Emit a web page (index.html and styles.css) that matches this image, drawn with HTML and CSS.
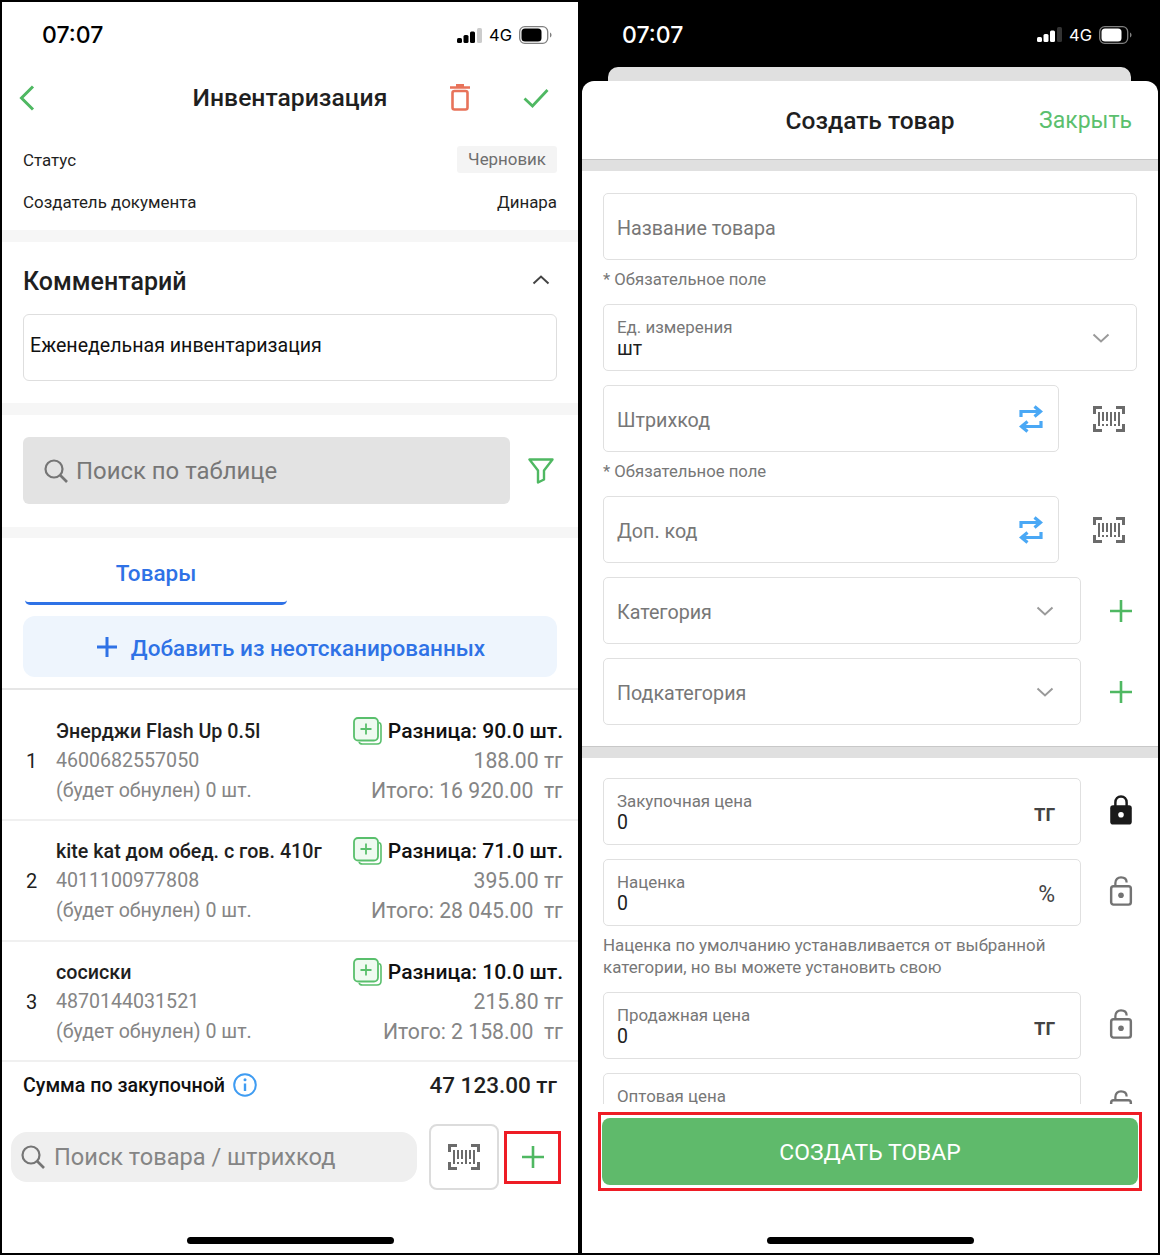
FILE: index.html
```html
<!DOCTYPE html>
<html lang="ru">
<head>
<meta charset="utf-8">
<title>Инвентаризация</title>
<link rel="stylesheet" href="styles.css">
</head>
<body>

<svg class="defs" width="0" height="0">
  <symbol id="barcode" viewBox="0 0 32 26">
    <path d="M1.500 8V1.500H9M23 1.500h7.500V8M1.500 18v6.500H9M23 24.500h7.500V18" fill="none" stroke="currentColor" stroke-width="3"/>
    <path d="M6 6v14M10 6v9M14 6v9M18 6v14M22 6v9M26 6v14M10 18v2M14 18v2M22 18v2" fill="none" stroke="currentColor" stroke-width="2"/>
  </symbol>
  <symbol id="swap" viewBox="0 0 24 28">
    <path d="M2 12V6.500h19M15.500 1.500l6 5-6 5M22 16v5.500H3M8.500 16.500l-6 5 6 5" fill="none" stroke="currentColor" stroke-width="3.200"/>
  </symbol>
  <symbol id="chev" viewBox="0 0 18 10">
    <path d="M1.500 1.500L9 8.500l7.500-7" fill="none" stroke="currentColor" stroke-width="2"/>
  </symbol>
  <symbol id="plus" viewBox="0 0 24 24">
    <path d="M12 1v22M1 12h22" fill="none" stroke="currentColor" stroke-width="2.600"/>
  </symbol>
  <symbol id="lens" viewBox="0 0 24 24">
    <circle cx="10" cy="10" r="8.500" fill="none" stroke="currentColor" stroke-width="2.200"/>
    <path d="M16 16l7 7" fill="none" stroke="currentColor" stroke-width="2.600"/>
  </symbol>
  <symbol id="lock-open" viewBox="0 0 24 32">
    <path d="M6 11V7.500C6 3.500 8.500 1.500 12 1.500s6 2 6 5.500" fill="none" stroke="currentColor" stroke-width="2.400"/>
    <rect x="1.500" y="11" width="21" height="19.500" rx="2.500" fill="none" stroke="currentColor" stroke-width="2.600"/>
    <circle cx="12" cy="20.500" r="3" fill="currentColor"/>
  </symbol>
  <symbol id="lock-closed" viewBox="0 0 24 32">
    <path d="M6 12V8c0-4 2.500-6.500 6-6.500S18 4 18 8v4" fill="none" stroke="currentColor" stroke-width="2.600"/>
    <rect x="0.500" y="11" width="23" height="20.500" rx="3" fill="currentColor"/>
    <circle cx="12" cy="21" r="3" fill="#fff"/>
  </symbol>
  <symbol id="copy-plus" viewBox="0 0 29 28">
    <path d="M26 5.500c1.500.5 2 1.500 2 3V23c0 2.500-1.500 4-4 4H9.500c-2 0-3-.5-3.500-2" fill="none" stroke="currentColor" stroke-width="1.600"/>
    <rect x="1" y="1" width="24" height="22.500" rx="4" fill="#effaf1" stroke="currentColor" stroke-width="1.800"/>
    <path d="M13 6.500v11M7.500 12h11" fill="none" stroke="currentColor" stroke-width="1.800"/>
  </symbol>
  <symbol id="signal" viewBox="0 0 25 15">
    <rect x="0" y="10" width="5" height="5" rx="1.500"/>
    <rect x="6.500" y="7" width="5" height="8" rx="1.500"/>
    <rect x="13" y="3.500" width="5" height="11.500" rx="1.500"/>
    <rect x="20" y="0" width="5" height="15" rx="1.500" opacity="0.2"/>
  </symbol>
  <symbol id="battery" viewBox="0 0 33 18">
    <rect x="0.700" y="0.700" width="28" height="16.600" rx="5" fill="none" stroke="currentColor" stroke-opacity="0.5" stroke-width="1.300"/>
    <rect x="2.500" y="2.500" width="20" height="13" rx="3.500" fill="currentColor"/>
    <path d="M31 6.500c1 .5 1.500 1.500 1.500 2.500s-.5 2-1.500 2.500z" fill="currentColor" fill-opacity="0.5"/>
  </symbol>
</svg>

<div class="phone phone-light">
  <div class="status">
    <span class="time">07:07</span>
    <span class="status-right">
      <svg class="ic-signal"><use href="#signal"/></svg>
      <span class="net">4G</span>
      <svg class="ic-battery"><use href="#battery"/></svg>
    </span>
  </div>

  <div class="nav">
    <svg class="ic-back" viewBox="0 0 16 26"><path d="M14 1.500L2.500 13 14 24.500" fill="none" stroke="currentColor" stroke-width="3"/></svg>
    <h1 class="nav-title">Инвентаризация</h1>
    <svg class="ic-trash" viewBox="0 0 20 27"><path d="M0 3.500h20M6 1.200h8" fill="none" stroke="currentColor" stroke-width="2.400"/><rect x="2.500" y="7" width="15" height="18.500" rx="2" fill="none" stroke="currentColor" stroke-width="2.600"/></svg>
    <svg class="ic-check" viewBox="0 0 26 20"><path d="M1.500 10.500L9.500 18 24.500 2" fill="none" stroke="currentColor" stroke-width="2.800"/></svg>
  </div>

  <div class="info">
    <div class="info-row"><span>Статус</span><span class="badge">Черновик</span></div>
    <div class="info-row info-row-two"><span>Создатель документа</span><span>Динара</span></div>
  </div>
  <div class="band"></div>

  <div class="comment">
    <div class="comment-head">
      <h2 class="comment-title">Комментарий</h2>
      <svg class="ic-up"><use href="#chev"/></svg>
    </div>
    <div class="comment-box">Еженедельная инвентаризация</div>
  </div>
  <div class="band"></div>

  <div class="table-search">
    <div class="table-search-box">
      <svg class="ic-lens"><use href="#lens"/></svg>
      <span>Поиск по таблице</span>
    </div>
    <svg class="ic-filter" viewBox="0 0 26 26"><path d="M1.500 1.500h23l-8.500 11v9l-6 3v-12z" fill="none" stroke="currentColor" stroke-width="2.400" stroke-linejoin="round"/></svg>
  </div>
  <div class="band band-thin"></div>

  <div class="tabs"><span class="tab">Товары</span></div>
  <div class="add-btn">
    <svg class="ic-add" viewBox="0 0 20 20"><path d="M10 0v20M0 10h20" fill="none" stroke="currentColor" stroke-width="3"/></svg>
    <span>Добавить из неотсканированных</span>
  </div>

  <div class="items">
    <div class="item">
      <div class="item-num">1</div>
      <div class="item-main">
        <div class="item-name">Энерджи Flash Up 0.5l</div>
        <div class="item-sub">4600682557050</div>
        <div class="item-sub">(будет обнулен) 0 шт.</div>
      </div>
      <div class="item-side">
        <div class="item-diff"><svg class="ic-copy"><use href="#copy-plus"/></svg>Разница: 90.0 шт.</div>
        <div class="item-sub">188.00 тг</div>
        <div class="item-sub">Итого: 16 920.00 &nbsp;тг</div>
      </div>
    </div>
    <div class="item">
      <div class="item-num">2</div>
      <div class="item-main">
        <div class="item-name">kite kat дом обед. с гов. 410г</div>
        <div class="item-sub">4011100977808</div>
        <div class="item-sub">(будет обнулен) 0 шт.</div>
      </div>
      <div class="item-side">
        <div class="item-diff"><svg class="ic-copy"><use href="#copy-plus"/></svg>Разница: 71.0 шт.</div>
        <div class="item-sub">395.00 тг</div>
        <div class="item-sub">Итого: 28 045.00 &nbsp;тг</div>
      </div>
    </div>
    <div class="item">
      <div class="item-num">3</div>
      <div class="item-main">
        <div class="item-name">сосиски</div>
        <div class="item-sub">4870144031521</div>
        <div class="item-sub">(будет обнулен) 0 шт.</div>
      </div>
      <div class="item-side">
        <div class="item-diff"><svg class="ic-copy"><use href="#copy-plus"/></svg>Разница: 10.0 шт.</div>
        <div class="item-sub">215.80 тг</div>
        <div class="item-sub">Итого: 2 158.00 &nbsp;тг</div>
      </div>
    </div>
  </div>

  <div class="total">
    <span class="total-label">Сумма по закупочной
      <svg class="ic-info" viewBox="0 0 24 24"><circle cx="12" cy="12" r="10.800" fill="none" stroke="currentColor" stroke-width="2"/><path d="M12 10.500v7.500" stroke="currentColor" stroke-width="2.400"/><circle cx="12" cy="6.800" r="1.500" fill="currentColor"/></svg>
    </span>
    <span class="total-sum">47 123.00 тг</span>
  </div>

  <div class="bottom">
    <div class="bottom-search">
      <svg class="ic-lens"><use href="#lens"/></svg>
      <span>Поиск товара / штрихкод</span>
    </div>
    <div class="scan-btn"><svg class="ic-barcode"><use href="#barcode"/></svg></div>
    <div class="plus-mark"><svg class="ic-add-green"><use href="#plus"/></svg></div>
  </div>

  <div class="home"></div>
</div>

<div class="phone phone-dark">
  <div class="status">
    <span class="time">07:07</span>
    <span class="status-right">
      <svg class="ic-signal"><use href="#signal"/></svg>
      <span class="net">4G</span>
      <svg class="ic-battery"><use href="#battery"/></svg>
    </span>
  </div>
  <div class="back-card"></div>

  <div class="sheet">
    <div class="sheet-head">
      <h2 class="sheet-title">Создать товар</h2>
      <span class="sheet-close">Закрыть</span>
    </div>
    <div class="sheet-band"></div>

    <div class="form">
      <div class="form-part">
        <div class="field field-plain">Название товара</div>
        <div class="note">* Обязательное поле</div>

        <div class="field field-label">
          <div class="field-text"><small>Ед. измерения</small><b>шт</b></div>
          <svg class="ic-chev ic-chev-wide"><use href="#chev"/></svg>
        </div>

        <div class="row row-top">
          <div class="field field-plain field-scan">Штрихкод<svg class="ic-swap"><use href="#swap"/></svg></div>
          <div class="side side-scan"><svg class="ic-barcode"><use href="#barcode"/></svg></div>
        </div>
        <div class="note">* Обязательное поле</div>

        <div class="row">
          <div class="field field-plain field-scan">Доп. код<svg class="ic-swap"><use href="#swap"/></svg></div>
          <div class="side side-scan"><svg class="ic-barcode"><use href="#barcode"/></svg></div>
        </div>

        <div class="row row-top">
          <div class="field field-plain field-side">Категория<svg class="ic-chev"><use href="#chev"/></svg></div>
          <div class="side"><svg class="ic-add-green"><use href="#plus"/></svg></div>
        </div>

        <div class="row row-top">
          <div class="field field-plain field-side">Подкатегория<svg class="ic-chev"><use href="#chev"/></svg></div>
          <div class="side"><svg class="ic-add-green"><use href="#plus"/></svg></div>
        </div>
      </div>

      <div class="sheet-band form-band"></div>

      <div class="form-part">
        <div class="row">
          <div class="field field-side field-label">
            <div class="field-text"><small>Закупочная цена</small><b>0</b></div>
            <span class="unit">тг</span>
          </div>
          <div class="side"><svg class="ic-lock ic-lock-dark"><use href="#lock-closed"/></svg></div>
        </div>
        <div class="row row-top">
          <div class="field field-side field-label">
            <div class="field-text"><small>Наценка</small><b>0</b></div>
            <span class="unit unit-pct">%</span>
          </div>
          <div class="side"><svg class="ic-lock"><use href="#lock-open"/></svg></div>
        </div>
        <div class="hint">Наценка по умолчанию устанавливается от выбранной категории, но вы можете установить свою</div>
        <div class="row">
          <div class="field field-side field-label">
            <div class="field-text"><small>Продажная цена</small><b>0</b></div>
            <span class="unit">тг</span>
          </div>
          <div class="side"><svg class="ic-lock"><use href="#lock-open"/></svg></div>
        </div>
        <div class="row row-top">
          <div class="field field-clip">
            <div class="field-text"><small>Оптовая цена</small></div>
          </div>
          <div class="side"><svg class="ic-lock"><use href="#lock-open"/></svg></div>
        </div>
      </div>
    </div>

    <div class="submit-mark"><div class="submit">СОЗДАТЬ ТОВАР</div></div>
    <div class="home"></div>
  </div>
</div>

</body>
</html>
```

FILE: styles.css
```css
html, body { margin: 0; padding: 0; }
body {
  width: 1160px;
  height: 1255px;
  background: #000;
  display: flex;
  gap: 4px;
  padding: 2px;
  box-sizing: border-box;
  overflow: hidden;
  font-family: Roboto, "Liberation Sans", sans-serif;
  color: #1f1f1f;
}
h1, h2 { margin: 0; }
.defs { position: absolute; }

.phone { width: 576px; height: 1251px; overflow: hidden; flex: none; }
.phone-light { background: #fff; }
.phone-dark { background: #000; }

/* status bar */
.status {
  height: 66px;
  display: flex;
  justify-content: space-between;
  align-items: center;
  padding: 0 26px 0 40px;
  box-sizing: border-box;
  color: #000;
}
.phone-dark .status { color: #fff; height: 65px; }
.time { font: 500 23px Inter, sans-serif; }
.status-right { display: flex; align-items: center; }
.ic-signal { width: 25px; height: 15px; fill: currentColor; }
.net { font: 400 16.500px Inter, sans-serif; margin: 0 7px; }
.ic-battery { width: 33px; height: 18px; }

/* left: nav */
.nav { height: 60px; position: relative; text-align: center; }
.nav-title { font-size: 24.700px; font-weight: 500; line-height: 60px; }
.ic-back { position: absolute; left: 17px; top: 17px; width: 16px; height: 26px; color: #4fb862; }
.ic-trash { position: absolute; left: 448px; top: 16px; width: 20px; height: 27px; color: #e8735a; }
.ic-check { position: absolute; left: 521px; top: 20px; width: 26px; height: 20px; color: #4fb862; }

.info { height: 102px; padding: 18px 21px 0; box-sizing: border-box; font-size: 16.900px; }
.info-row { display: flex; justify-content: space-between; align-items: center; height: 27px; }
.info-row-two { margin-top: 15px; }
.badge { background: #f4f4f4; color: #6e6e6e; padding: 0 11px; line-height: 27px; border-radius: 3px; }

.band { height: 12px; background: #f6f6f6; }
.band-thin { height: 11px; }

.comment { height: 161px; padding: 22px 21px 0; box-sizing: border-box; }
.comment-head { height: 34px; display: flex; justify-content: space-between; align-items: center; margin-bottom: 16px; }
.comment-title { font-size: 25px; font-weight: 500; }
.ic-up { width: 18px; height: 10px; margin: 0 7px 2px 0; transform: rotate(180deg); color: #444; }
.comment-box {
  height: 67px;
  border: 1.500px solid #dedede;
  border-radius: 6px;
  box-sizing: border-box;
  padding-left: 6px;
  line-height: 62px;
  font-size: 19.600px;
  color: #111;
}

.table-search { height: 112px; display: flex; padding: 22px 21px 0; box-sizing: border-box; align-items: flex-start; }
.table-search-box {
  width: 487px;
  height: 67px;
  background: #e3e3e3;
  border-radius: 6px;
  display: flex;
  align-items: center;
  padding-left: 21px;
  box-sizing: border-box;
  color: #777;
  font-size: 23.900px;
}
.ic-lens { width: 24px; height: 24px; margin-right: 8px; flex: none; color: #757575; }
.ic-filter { width: 26px; height: 26px; margin: 21px 0 0 18px; color: #4fb862; }

.tabs { height: 67px; padding-left: 23px; }
.tab {
  display: block;
  width: 262px;
  height: 67px;
  box-sizing: border-box;
  text-align: center;
  line-height: 71px;
  font-size: 22.500px;
  font-weight: 500;
  color: #2f72e6;
  border-bottom: 3px solid #2f72e6;
  border-radius: 0 0 5px 5px;
}
.add-btn {
  margin: 11px 21px;
  height: 61px;
  padding-left: 2px;
  background: #eef5fd;
  border-radius: 12px;
  display: flex;
  align-items: center;
  justify-content: center;
  color: #2f72e6;
  font-size: 22.500px;
  font-weight: 500;
}
.add-btn span { padding-top: 2px; }
.ic-add { width: 20px; height: 20px; margin-right: 14px; }

/* left: goods */
.items { border-top: 2px solid #e6e6e6; padding-top: 11px; }
.item {
  height: 120.500px;
  border-bottom: 2px solid #f0f0f0;
  box-sizing: border-box;
  display: flex;
  padding: 15px 15px 0 24px;
}
.item:first-child { height: 120px; }
.item-num { width: 30px; font-size: 20px; line-height: 30px; padding-top: 30px; flex: none; }
.item-main { flex: 1; padding-top: 1px; }
.item-name { font-size: 19.700px; font-weight: 500; line-height: 29px; white-space: nowrap; }
.item-sub { font-size: 19.600px; line-height: 30px; color: #858585; white-space: nowrap; }
.item-side { text-align: right; }
.item-side .item-sub { font-size: 21.200px; }
.item-diff { font-size: 21.100px; font-weight: 500; line-height: 30px; color: #111; white-space: nowrap; display: flex; align-items: center; justify-content: flex-end; }
.ic-copy { width: 29px; height: 28px; margin-right: 6px; color: #59bf6c; }

.total { height: 44px; display: flex; justify-content: space-between; align-items: center; padding: 2px 21px 0; box-sizing: border-box; font-weight: 500; }
.total-label { font-size: 19.600px; display: flex; align-items: center; color: #111; }
.ic-info { width: 24px; height: 24px; margin-left: 8px; color: #3f9cf2; }
.total-sum { font-size: 22.500px; }

.bottom { display: flex; align-items: center; margin-top: 18px; padding-left: 9px; height: 66px; }
.bottom-search {
  width: 406px;
  height: 50px;
  background: #efefef;
  border-radius: 16px;
  display: flex;
  align-items: center;
  padding-left: 10px;
  box-sizing: border-box;
  color: #858585;
  font-size: 23.600px;
}
.bottom-search .ic-lens { margin-right: 9px; }
.scan-btn {
  width: 70px;
  height: 66px;
  margin-left: 12px;
  border: 2px solid #dcdcdc;
  border-radius: 8px;
  box-sizing: border-box;
  display: flex;
  align-items: center;
  justify-content: center;
}
.ic-barcode { width: 32px; height: 26px; color: #6b6b6b; }
.plus-mark {
  width: 57px;
  height: 53px;
  margin-left: 5px;
  border: 3px solid #ee1c25;
  box-sizing: border-box;
  display: flex;
  align-items: center;
  justify-content: center;
}
.ic-add-green { width: 24px; height: 24px; color: #4fb862; }
.home { width: 207px; height: 7px; margin: 47px auto 0; background: #000; border-radius: 4px; }

/* right: sheet */
.back-card { height: 14px; margin: 0 27px 0 26px; background: #e0e0e0; border-radius: 10px 10px 0 0; }
.sheet { height: 1172px; background: #fff; border-radius: 12px 12px 0 0; }
.sheet-head { height: 78px; position: relative; text-align: center; }
.sheet-title { font-size: 24.500px; font-weight: 500; line-height: 80px; }
.sheet-close { position: absolute; right: 26px; top: 0; line-height: 80px; font-size: 23px; color: #5bbf6e; }
.sheet-band { height: 11px; background: #e0e0e0; border-top: 1px solid #c8c8c8; }

.form { height: 933px; overflow: hidden; }
.form-part { padding: 22px 21px 0; }
.form-band { margin-top: 21px; }
.form-band + .form-part { padding-top: 20px; }

.field {
  height: 67px;
  border: 1.500px solid #e0e0e0;
  border-radius: 5px;
  box-sizing: border-box;
  display: flex;
  align-items: center;
  justify-content: space-between;
  padding: 0 20px 0 13px;
  font-size: 19.700px;
  color: #777;
  flex: 1;
}
.field-plain { padding-top: 4px; }
.field-plain svg { margin-top: -4px; }
.field-scan { padding-right: 15px; }
.field-side { padding-right: 25px; }
.field-clip { align-items: flex-start; padding-top: 10.500px; }
.field-text { display: flex; flex-direction: column; }
.field-text small { font-size: 16.900px; line-height: 22px; color: #777; }
.field-text b { font-size: 19.500px; font-weight: 400; line-height: 22px; color: #1f1f1f; }
.note { height: 44px; padding-top: 9px; box-sizing: border-box; line-height: 22px; font-size: 16.700px; color: #777; }
.row { display: flex; }
.row-top { margin-top: 14px; }
.side { width: 56px; flex: none; display: flex; align-items: center; justify-content: flex-end; padding-right: 4px; box-sizing: border-box; }
.side-scan { width: 78px; padding-right: 12px; }
.ic-swap { width: 24px; height: 28px; color: #4aa8f5; flex: none; }
.ic-chev { width: 18px; height: 10px; margin-right: 1px; color: #9a9a9a; flex: none; }
.ic-chev-wide { margin-right: 6px; }
.unit { font-size: 23px; font-weight: 500; color: #444; margin-top: 3px; }
.unit-pct { font-weight: 400; }
.ic-lock { width: 24px; height: 30px; margin-top: -3px; color: #737373; }
.ic-lock-dark { color: #1a1a1a; }
.hint { padding: 8px 0 14px; line-height: 22px; font-size: 16.900px; color: #777; width: 470px; }

.submit-mark { margin: 8px 16px 0; height: 79px; border: 3px solid #ee1c25; box-sizing: border-box; padding: 3px 1px; }
.submit {
  height: 67px;
  background: #5fba6b;
  border-radius: 8px;
  color: #fff;
  text-align: center;
  line-height: 70px;
  font-size: 22.900px;
}
.phone-dark .home { margin-top: 46px; }
```
